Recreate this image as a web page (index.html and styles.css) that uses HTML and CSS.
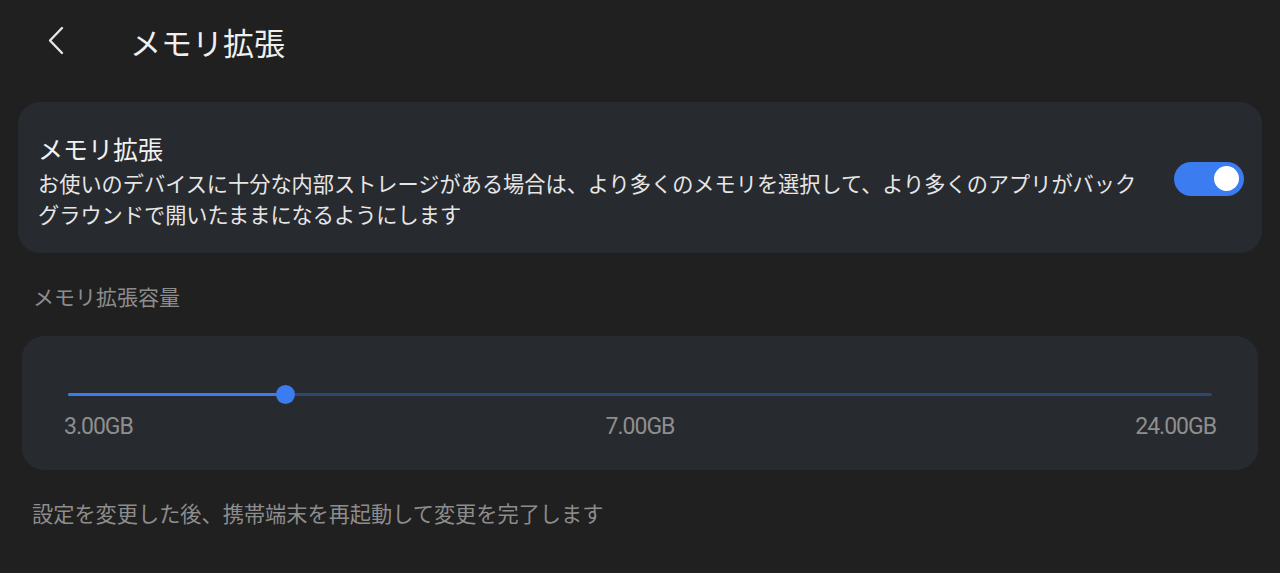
FILE: index.html
```html
<!DOCTYPE html>
<html lang="ja">
<head>
<meta charset="utf-8">
<title>メモリ拡張</title>
<link rel="stylesheet" href="styles.css">
</head>
<body>
<div class="page">
  <header class="appbar">
    <svg class="back" width="20" height="30" viewBox="0 0 20 30" aria-hidden="true">
      <path d="M15 2 L3 14.5 L15 27" fill="none" stroke="#e6e6e6" stroke-width="2.4" stroke-linecap="round" stroke-linejoin="round"/>
    </svg>
    <h1 class="title">メモリ拡張</h1>
  </header>

  <section class="card switch-card">
    <div class="switch-text">
      <div class="item-title">メモリ拡張</div>
      <div class="item-desc">お使いのデバイスに十分な内部ストレージがある場合は、より多くのメモリを選択して、より多くのアプリがバックグラウンドで開いたままになるようにします</div>
    </div>
    <div class="toggle"><div class="knob"></div></div>
  </section>

  <div class="section-label">メモリ拡張容量</div>

  <section class="card slider-card">
    <div class="slider">
      <div class="track"></div>
      <div class="fill" style="width:19%"></div>
      <div class="thumb" style="left:19%"></div>
    </div>
    <div class="ticks">
      <span class="tick-start">3.00GB</span>
      <span class="tick-mid">7.00GB</span>
      <span class="tick-end">24.00GB</span>
    </div>
  </section>

  <p class="footnote">設定を変更した後、携帯端末を再起動して変更を完了します</p>
</div>
</body>
</html>
```

FILE: styles.css
```css
html, body {
  margin: 0;
  padding: 0;
  background: #202020;
}
body {
  font-family: "Noto Sans CJK JP", "Noto Sans", sans-serif;
  color: #ececec;
  width: 1280px;
  height: 573px;
  overflow: hidden;
}
.page {
  display: flex;
  flex-direction: column;
}
.appbar {
  height: 84px;
  display: flex;
  align-items: center;
  padding-left: 47px;
}
.back {
  display: block;
  margin-top: -2px;
}
.title {
  margin: 0 0 0 63px;
  font-size: 31px;
  font-weight: 400;
  line-height: 40px;
  color: #efefef;
}
.card {
  background: #272a2f;
  border-radius: 22px;
}
.switch-card {
  margin: 18px 18px 0 18px;
  padding: 29px 18px 24px 20px;
  display: flex;
  align-items: center;
  gap: 26px;
}
.switch-text {
  flex: 1;
  min-width: 0;
}
.item-title {
  font-size: 25px;
  line-height: 34px;
  color: #f2f2f2;
  margin-bottom: 2px;
}
.item-desc {
  font-size: 21.2px;
  line-height: 31px;
  color: #e6e6e6;
}
.toggle {
  width: 70px;
  height: 34px;
  border-radius: 17px;
  background: #3b7cf0;
  flex: none;
  display: flex;
  align-items: center;
  justify-content: flex-end;
  padding-right: 5px;
  box-sizing: border-box;
  margin-top: -3px;
}
.knob {
  width: 25px;
  height: 25px;
  border-radius: 50%;
  background: #ffffff;
}
.section-label {
  margin-top: 28px;
  padding-left: 33px;
  font-size: 21px;
  line-height: 30px;
  color: #8d8d8d;
}
.slider-card {
  margin: 25px 22px 0 22px;
  padding: 48px 42px 29px 42px;
  height: 134px;
  box-sizing: border-box;
}
.slider {
  position: relative;
  height: 20px;
  margin: 0 4px;
}
.track {
  position: absolute;
  left: 0;
  right: 0;
  top: 9px;
  height: 3px;
  background: #2d4674;
  border-radius: 2px;
}
.fill {
  position: absolute;
  left: 0;
  top: 9px;
  height: 3px;
  background: #3b7cf0;
  border-radius: 2px;
}
.thumb {
  position: absolute;
  top: 1px;
  width: 19px;
  height: 19px;
  margin-left: -9px;
  border-radius: 50%;
  background: #3b7cf0;
}
.ticks {
  margin-top: 9px;
  display: grid;
  grid-template-columns: 1fr auto 1fr;
  font-family: Roboto, "Noto Sans", sans-serif;
  font-size: 23px;
  letter-spacing: -1px;
  line-height: 28px;
  color: #8e8e8e;
}
.tick-start { text-align: left; }
.tick-mid { text-align: center; }
.tick-end { text-align: right; }
.footnote {
  margin: 28px 0 0 0;
  padding-left: 32px;
  font-size: 21.2px;
  line-height: 30px;
  color: #8d8d8d;
}
```
